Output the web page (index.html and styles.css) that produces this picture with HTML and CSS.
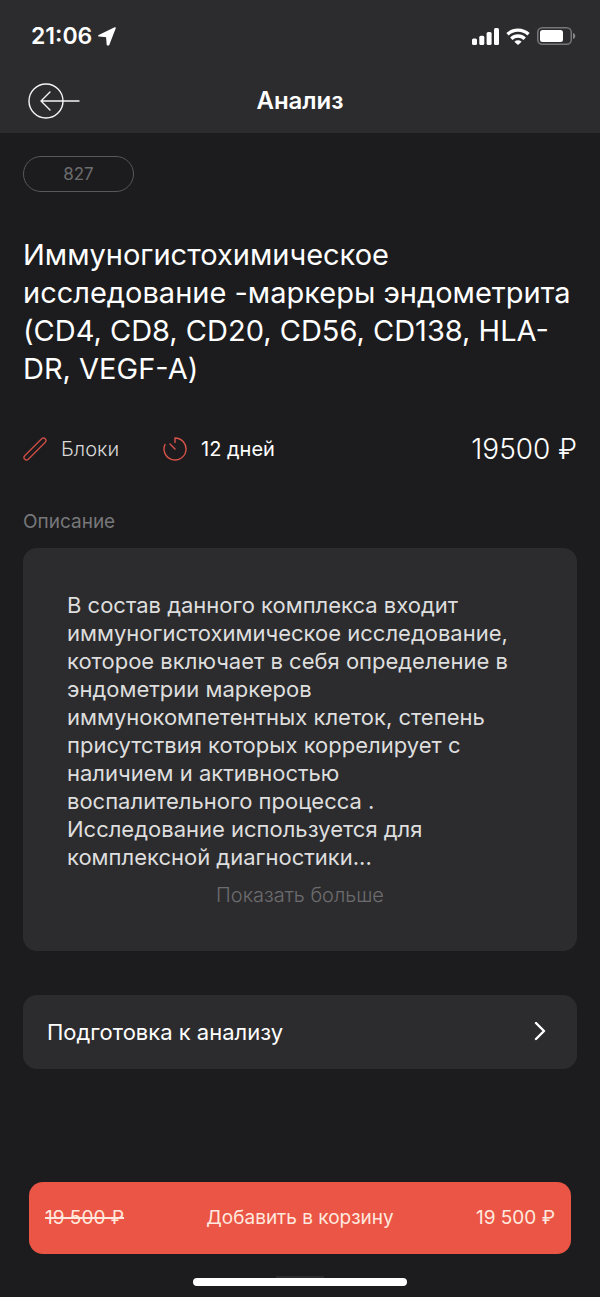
FILE: index.html
```html
<!DOCTYPE html>
<html lang="ru">
<head>
<meta charset="utf-8">
<meta name="viewport" content="width=device-width, initial-scale=1">
<title>Анализ</title>
<link rel="stylesheet" href="styles.css">
</head>
<body>
<div class="app">
  <header class="header">
    <div class="status">
      <div class="status-time">
        <span>21:06</span>
        <svg width="18" height="19" viewBox="0 0 18 19" fill="#fff" stroke="#fff" stroke-width="1.600" stroke-linejoin="round" aria-hidden="true"><path d="M17 1 1 8.800l7.800.700.700 8.300h1z"/></svg>
      </div>
      <div class="status-icons">
        <svg width="27" height="17" viewBox="0 0 27 17" fill="#fff" aria-hidden="true"><rect x="0" y="10.500" width="5" height="6.500" rx="1.500"/><rect x="7.300" y="7.800" width="5" height="9.200" rx="1.500"/><rect x="14.600" y="4" width="5" height="13" rx="1.500"/><rect x="22" y="0" width="5" height="17" rx="1.500"/></svg>
        <svg width="24" height="17" viewBox="0 0 24 17" fill="none" stroke="#fff" stroke-width="3.400" aria-hidden="true"><path d="M1.500 6.300a15.300 15.300 0 0 1 21 0"/><path d="M5.300 10.700a9.700 9.700 0 0 1 13.400 0"/><path d="M12 17 8.400 13.800a5.200 5.200 0 0 1 7.200 0z" fill="#fff" stroke="none"/></svg>
        <svg width="39" height="18" viewBox="0 0 39 18" aria-hidden="true"><rect x=".75" y=".75" width="33.500" height="16.500" rx="4.500" fill="none" stroke="#77777a" stroke-width="1.500"/><rect x="3" y="3" width="23" height="12" rx="2.500" fill="#fff"/><path d="M36 6c3 1 3 5 0 6z" fill="#858587"/></svg>
      </div>
    </div>
    <div class="navbar">
      <button class="back" type="button" aria-label="Назад">
        <svg width="52" height="36" viewBox="0 0 52 36" fill="none" stroke="#f4f4f4" stroke-width="1.400" stroke-linecap="round" stroke-linejoin="round" aria-hidden="true"><circle cx="18" cy="18" r="17"/><path d="M51 18H13M22 9l-9 9 9 9"/></svg>
      </button>
      <h1 class="nav-title">Анализ</h1>
    </div>
  </header>

  <main class="content">
    <span class="code">827</span>
    <h2 class="title">Иммуногистохимическое исследование -маркеры эндометрита (CD4, CD8, CD20, CD56, CD138, HLA-<br>DR, VEGF-A)</h2>

    <div class="facts">
      <span class="fact fact-material">
        <svg width="24" height="24" viewBox="0 0 24 24" fill="none" stroke="#c94c44" stroke-width="1.400" aria-hidden="true"><path d="M18.700 1.700a2.550 2.550 0 0 1 3.600 3.600L5.300 22.300a2.550 2.550 0 0 1-3.600-3.600z"/></svg>
        Блоки
      </span>
      <span class="fact">
        <svg width="24" height="24" viewBox="0 0 24 24" fill="none" stroke="#d9534a" stroke-width="1.400" stroke-linecap="round" stroke-linejoin="round" aria-hidden="true"><path d="M12 5.500V1A11 11 0 1 1 2 7.500M7 7l5 5"/></svg>
        12 дней
      </span>
      <strong class="price">19500 ₽</strong>
    </div>

    <h3 class="label">Описание</h3>
    <section class="card">
      <p class="text">В состав данного комплекса входит иммуногистохимическое исследование, которое включает в себя определение в эндометрии маркеров иммунокомпетентных клеток, степень присутствия которых коррелирует с наличием и активностью<br>воспалительного процесса .<br>Исследование используется для комплексной диагностики...</p>
      <button class="more" type="button">Показать больше</button>
    </section>

    <button class="row" type="button">
      <span>Подготовка к анализу</span>
      <svg width="12" height="20" viewBox="0 0 12 20" fill="none" stroke="#fff" stroke-width="2.400" stroke-linecap="round" stroke-linejoin="round" aria-hidden="true"><path d="m2 1 8 8-8 8"/></svg>
    </button>
  </main>

  <footer class="footer">
    <button class="buy" type="button">
      <s class="buy-old">19 500 ₽</s>
      <span>Добавить в корзину</span>
      <span class="buy-price">19 500 ₽</span>
    </button>
    <div class="home"></div>
  </footer>
</div>
</body>
</html>
```

FILE: styles.css
```css
* {
  box-sizing: border-box;
}

body {
  margin: 0;
  background: #1c1c1e;
  color: #fff;
  font-family: Inter, "Liberation Sans", sans-serif;
}

button {
  margin: 0;
  padding: 0;
  border: 0;
  background: none;
  color: inherit;
  font: inherit;
  cursor: pointer;
}

svg {
  display: block;
  flex: none;
}

.app {
  display: flex;
  flex-direction: column;
  min-height: 100vh;
}

.header {
  padding-bottom: 3px;
  background: #2c2c2e;
}

.status {
  display: flex;
  align-items: center;
  justify-content: space-between;
  height: 72px;
  padding: 0 24px 0 31px;
}

.status-time {
  display: flex;
  align-items: center;
  gap: 6px;
  font-size: 23px;
  font-weight: 600;
}

.status-icons {
  display: flex;
  align-items: center;
  gap: 7px;
}

.navbar {
  display: grid;
  grid-template-columns: 1fr auto 1fr;
  align-items: center;
  height: 58px;
  padding: 0 28px;
}

.back {
  justify-self: start;
}

.nav-title {
  margin: 0;
  font-size: 24px;
  font-weight: 600;
  line-height: 28px;
}

.content {
  display: flex;
  flex-direction: column;
  align-items: stretch;
  padding: 23px;
}

.code {
  align-self: flex-start;
  min-width: 111px;
  border: 1px solid #58585a;
  border-radius: 18px;
  color: #6c6c6e;
  font-size: 17px;
  line-height: 34px;
  text-align: center;
}

.title {
  margin: 44px 0 0;
  font-size: 29px;
  font-weight: 400;
  line-height: 38px;
}

.facts {
  display: flex;
  align-items: center;
  gap: 44px;
  margin-top: 43px;
  line-height: 36px;
}

.fact {
  display: flex;
  align-items: center;
  gap: 14px;
  font-size: 20px;
}

.fact-material {
  color: #d8d8d8;
  font-weight: 300;
}

.price {
  margin-left: auto;
  font-size: 28px;
  font-weight: 300;
}

.label {
  margin: 42px 0 13px;
  color: #77777a;
  font-size: 19px;
  font-weight: 400;
  line-height: 26px;
}

.card {
  display: flex;
  flex-direction: column;
  align-items: center;
  padding: 43px 44px;
  border-radius: 14px;
  background: #2c2c2e;
}

.text {
  align-self: stretch;
  margin: 0;
  color: #dedede;
  font-size: 22px;
  font-weight: 400;
  line-height: 28px;
}

.more {
  margin-top: 11px;
  color: #6c6c6e;
  font-size: 20px;
  font-weight: 300;
  line-height: 26px;
}

.row {
  display: flex;
  align-items: center;
  justify-content: space-between;
  margin-top: 44px;
  padding: 22px 31px 22px 24px;
  border-radius: 14px;
  background: #2c2c2e;
  font-size: 22px;
  line-height: 30px;
}

.footer {
  display: flex;
  flex-direction: column;
  gap: 24px;
  margin-top: auto;
  padding: 0 29px 11px;
}

.buy {
  display: grid;
  grid-template-columns: 1fr auto 1fr;
  align-items: center;
  padding: 0 16px;
  border-radius: 14px;
  background: #eb5545;
  color: #ffe9df;
  font-size: 19px;
  line-height: 72px;
}

.buy-old {
  justify-self: start;
  text-decoration-thickness: 2px;
}

.buy-price {
  justify-self: end;
}

.home {
  position: relative;
  align-self: center;
  width: 214px;
  height: 8px;
  border-radius: 4px;
  background: #fff;
}

.home::before {
  content: "";
  position: absolute;
  top: -2px;
  left: 39%;
  right: 39%;
  height: 2px;
  background: #2c2c2e;
}
```
